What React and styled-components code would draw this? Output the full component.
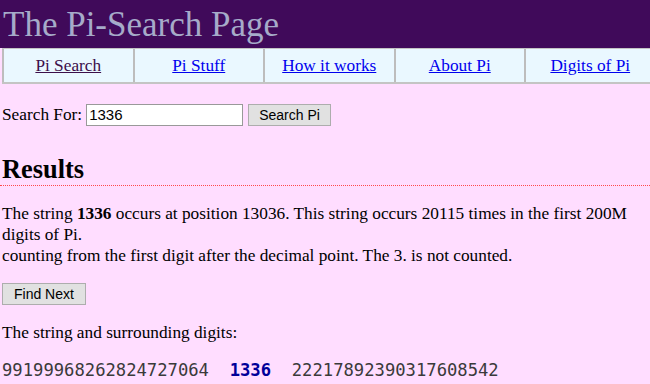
import styled, { createGlobalStyle } from 'styled-components';

const GlobalStyle = createGlobalStyle`
  html, body {
    margin: 0;
    padding: 0;
    overflow: hidden;
  }
  body {
    background: #ffddff;
    font-family: "Liberation Serif", "Times New Roman", serif;
    font-size: 17.3px;
    color: #000;
  }
`;

const Header = styled.header`
  background: #400a5a;
  height: 48px;
  display: flex;
  align-items: center;
  padding-left: 3px;
`;

const Title = styled.h1`
  margin: 0;
  font-weight: normal;
  font-size: 35px;
  color: #a6abc9;
  line-height: 1;
`;

const Nav = styled.nav`
  display: grid;
  grid-template-columns: repeat(5, 130.5px);
  width: 660px;
  margin-left: 2px;
  border-top: 1px solid #c4c4c4;
  border-bottom: 2px solid #c4c4c4;
`;

const NavCell = styled.div`
  background: #eaf8ff;
  height: 33px;
  display: flex;
  align-items: center;
  justify-content: center;
  border-left: 2px solid #bdbdbd;
`;

const NavLink = styled.a`
  color: ${p => (p.$visited ? '#3c0f4a' : '#0000ee')};
  text-decoration: underline;
`;

const Content = styled.main`
  padding: 0 3px 0 2px;
`;

const SearchRow = styled.form`
  display: flex;
  align-items: center;
  gap: 5px;
  margin-top: 19px;
  height: 23px;
`;

const Input = styled.input`
  width: 151px;
  height: 20px;
  padding: 0 2px;
  margin-left: -1px;
  border: 1px solid #999;
  font-family: "Liberation Sans", Arial, sans-serif;
  font-size: 15px;
  background: #fff;
`;

const Button = styled.button`
  height: 22px;
  padding: 0 ${p => p.$pad || 11}px;
  background: #e1e1e1;
  border: 1px solid #adadad;
  font-family: "Liberation Sans", Arial, sans-serif;
  font-size: 14px;
  color: #000;
`;

const Heading = styled.h2`
  margin: 28px -3px 0 -2px;
  padding: 0 3px 1px 2px;
  font-size: 26.4px;
  font-weight: bold;
  line-height: 30px;
  border-bottom: 1px dotted #ff4a4a;
`;

const Text = styled.p`
  margin: ${p => p.$top || 16}px 0 0;
  line-height: 21px;
`;

const FindRow = styled.div`
  margin-top: 17px;
`;

const Digits = styled.div`
  margin-top: 17px;
  font-family: "DejaVu Sans Mono", "Liberation Mono", monospace;
  font-size: 17.2px;
  color: #3a3a3a;
  white-space: pre;
`;

const Hit = styled.b`
  color: #000099;
`;

const links = ['Pi Search', 'Pi Stuff', 'How it works', 'About Pi', 'Digits of Pi'];

export default function App() {
  return (
    <>
      <GlobalStyle />
      <Header>
        <Title>The Pi-Search Page</Title>
      </Header>
      <Nav>
        {links.map((l, i) => (
          <NavCell key={l}>
            <NavLink href="#" $visited={i === 0}>{l}</NavLink>
          </NavCell>
        ))}
      </Nav>
      <Content>
        <SearchRow onSubmit={e => e.preventDefault()}>
          <label>Search For:</label>
          <Input defaultValue="1336" />
          <Button type="submit" $pad={10}>Search Pi</Button>
        </SearchRow>
        <Heading>Results</Heading>
        <Text $top={17}>
          The string <b>1336</b> occurs at position 13036. This string occurs 20115 times in the first 200M digits of Pi.
          <br />
          counting from the first digit after the decimal point. The 3. is not counted.
        </Text>
        <FindRow>
          <Button type="button">Find Next</Button>
        </FindRow>
        <Text $top={17}>The string and surrounding digits:</Text>
        <Digits>
          {'99199968262824727064  '}
          <Hit>1336</Hit>
          {'  22217892390317608542'}
        </Digits>
      </Content>
    </>
  );
}
